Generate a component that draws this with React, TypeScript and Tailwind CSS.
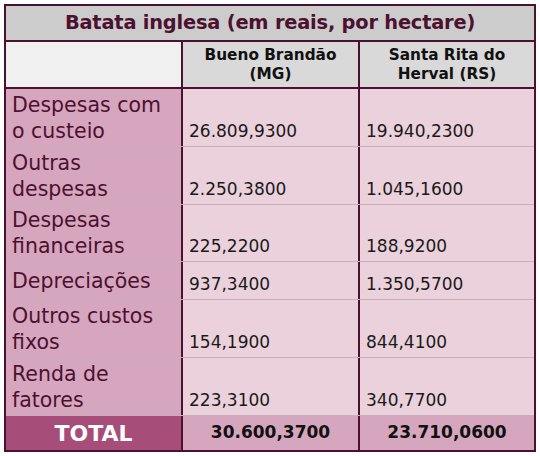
import React from "react";

const rows = [
  { label: ["Despesas com", "o custeio"], a: "26.809,9300", b: "19.940,2300", h: "h-[57px]" },
  { label: ["Outras", "despesas"], a: "2.250,3800", b: "1.045,1600", h: "h-[57px]" },
  { label: ["Despesas", "financeiras"], a: "225,2200", b: "188,9200", h: "h-[56px]" },
  { label: ["Depreciações"], a: "937,3400", b: "1.350,5700", h: "h-[37px]" },
  { label: ["Outros custos", "fixos"], a: "154,1900", b: "844,4100", h: "h-[57px]" },
  { label: ["Renda de", "fatores"], a: "223,3100", b: "340,7700", h: "h-[57px]" },
];

export default function App() {
  const font = { fontFamily: '"DejaVu Sans", "Liberation Sans", sans-serif' };
  return (
    <div className="w-[540px] h-[456px] bg-white pt-[4px] pl-[4px]" style={font}>
      <div className="w-[532px] border-2 border-[#4c1130] flex flex-col">
        <div className="h-[36px] bg-[#cccccc] flex items-center justify-center border-b-2 border-[#4c1130]">
          <span className="text-[#4c1130] font-bold text-[19.4px] tracking-[-0.2px]">Batata inglesa (em reais, por hectare)</span>
        </div>
        <div className="h-[47px] flex border-b-2 border-[#4c1130]">
          <div className="w-[177px] bg-[#f0f0f0] border-r-2 border-[#4c1130]" />
          <div className="w-[177px] bg-[#d9d9d9] border-r-2 border-[#4c1130] flex flex-col items-center justify-center text-[15.3px] leading-[19px] font-bold text-[#111]">
            <span>Bueno Brandão</span>
            <span>(MG)</span>
          </div>
          <div className="flex-1 bg-[#d9d9d9] flex flex-col items-center justify-center text-[15.3px] leading-[19px] font-bold text-[#111]">
            <span>Santa Rita do</span>
            <span>Herval (RS)</span>
          </div>
        </div>
        {rows.map((r, i) => (
          <div key={i} className={`${r.h} flex border-b border-[#c9aebb] box-content`}>
            <div className="w-[177px] bg-[#d5a6bd] border-r-2 border-[#4c1130] flex flex-col justify-center pl-[6px] text-[20.5px] leading-[26px] text-[#4c1130]">
              {r.label.map((l, j) => (
                <span key={j}>{l}</span>
              ))}
            </div>
            <div className="w-[177px] bg-[#ead1dc] border-r-2 border-[#4c1130] flex items-end pl-[6px] pb-[4px] text-[17px] leading-[22px] text-[#1a1a1a]">
              {r.a}
            </div>
            <div className="flex-1 bg-[#ead1dc] flex items-end pl-[6px] pb-[4px] text-[17px] leading-[22px] text-[#1a1a1a]">
              {r.b}
            </div>
          </div>
        ))}
        <div className="h-[34px] flex">
          <div className="w-[177px] bg-[#a64d79] border-r-2 border-[#4c1130] flex items-center justify-center text-white font-bold text-[22px]">
            TOTAL
          </div>
          <div className="w-[177px] bg-[#d5a6bd] border-r-2 border-[#4c1130] flex items-center justify-center font-bold text-[17px] text-[#111]">
            30.600,3700
          </div>
          <div className="flex-1 bg-[#d5a6bd] flex items-center justify-center font-bold text-[17px] text-[#111]">
            23.710,0600
          </div>
        </div>
      </div>
    </div>
  );
}
